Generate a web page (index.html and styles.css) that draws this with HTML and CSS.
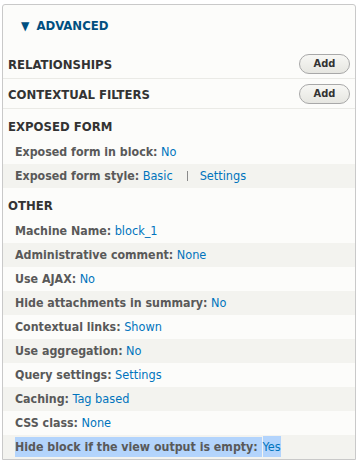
FILE: index.html
```html
<!DOCTYPE html>
<html lang="en">
<head>
  <meta charset="UTF-8" />
  <meta name="viewport" content="width=device-width, initial-scale=1.0"/>
  <title>Views advanced settings</title>
  <link rel="stylesheet" href="styles.css">
</head>
<body>

<div class="panel">
  <div class="legend"><a href="#"><span class="arrow">▼</span> ADVANCED</a></div>

  <div class="bucket">
    <h3>RELATIONSHIPS</h3>
    <button class="add">Add</button>
  </div>
  <div class="bucket">
    <h3>CONTEXTUAL FILTERS</h3>
    <button class="add">Add</button>
  </div>

  <div class="section">
    <h3>EXPOSED FORM</h3>
    <ul class="rows">
      <li><span class="label">Exposed form in block:</span> <a href="#">No</a></li>
      <li><span class="label">Exposed form style:</span> <a href="#">Basic</a><span class="pipe"></span><a href="#">Settings</a></li>
    </ul>
  </div>

  <div class="section">
    <h3>OTHER</h3>
    <ul class="rows">
      <li><span class="label">Machine Name:</span> <a href="#">block_1</a></li>
      <li><span class="label">Administrative comment:</span> <a href="#">None</a></li>
      <li><span class="label">Use AJAX:</span> <a href="#">No</a></li>
      <li><span class="label">Hide attachments in summary:</span> <a href="#">No</a></li>
      <li><span class="label">Contextual links:</span> <a href="#">Shown</a></li>
      <li><span class="label">Use aggregation:</span> <a href="#">No</a></li>
      <li><span class="label">Query settings:</span> <a href="#">Settings</a></li>
      <li><span class="label">Caching:</span> <a href="#">Tag based</a></li>
      <li><span class="label">CSS class:</span> <a href="#">None</a></li>
      <li><span class="label sel">Hide block if the view output is empty: </span><a href="#" class="sel val">Yes</a></li>
    </ul>
  </div>
</div>

</body>
</html>
```

FILE: styles.css
```css
body {
  margin: 0;
  padding: 4px 0 0 2px;
  background: #fff;
  font-family: "DejaVu Sans Condensed", "DejaVu Sans", sans-serif;
  font-stretch: condensed;
  font-size: 12px;
  color: #333;
}

.panel {
  width: 352px;
  border: 1px solid #c9c9c9;
  border-radius: 3px 3px 0 0;
  background: #fcfcfa;
}

.legend {
  height: 44px;
  box-sizing: border-box;
  padding: 0 0 3px 18px;
  display: flex;
  align-items: center;
}

.legend a {
  color: #004f80;
  font-weight: bold;
  font-size: 13px;
  text-decoration: none;
}

.legend .arrow {
  font-size: 12px;
  margin-right: 3px;
}

h3 {
  margin: 0;
  font-size: 13px;
  font-weight: bold;
  color: #333;
}

.bucket {
  height: 30px;
  box-sizing: border-box;
  border-bottom: 1px solid #eaeae6;
  display: flex;
  align-items: center;
  justify-content: space-between;
  padding: 0 5px;
}

.bucket h3 {
  padding-top: 2px;
}

.add {
  width: 51px;
  height: 20px;
  border: 1px solid #a8a8a8;
  border-radius: 10px;
  background: linear-gradient(#f7f7f4, #e6e6e1);
  font-family: inherit;
  font-stretch: condensed;
  font-size: 11px;
  font-weight: bold;
  color: #333;
  padding: 0;
  cursor: pointer;
}

.section h3 {
  padding: 9px 5px 4px;
  line-height: 18px;
}

.rows {
  list-style: none;
  margin: 0;
  padding: 0;
}

.rows li {
  height: 24px;
  line-height: 24px;
  padding-left: 12px;
  font-size: 12.3px;
}

.rows li:nth-child(even) {
  background: #f3f3ef;
}

.label {
  font-weight: bold;
  color: #595959;
}

.rows a {
  color: #0074bd;
  text-decoration: none;
  font-size: 12.6px;
}

.pipe {
  display: inline-block;
  width: 1px;
  height: 10px;
  background: #8a8a8a;
  margin: 0 12px 0 14px;
  vertical-align: -1px;
}

.sel {
  background: #b3d4fc;
  padding: 3px 0;
}

.sel.val {
  margin-left: 1px;
}
```
